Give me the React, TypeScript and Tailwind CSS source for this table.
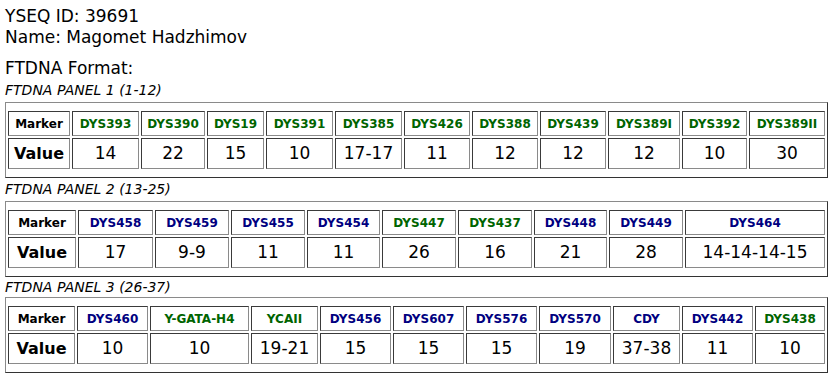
import React from "react";

type Marker = { name: string; value: string; green: boolean };

const panel1: Marker[] = [
  { name: "DYS393", value: "14", green: true },
  { name: "DYS390", value: "22", green: true },
  { name: "DYS19", value: "15", green: true },
  { name: "DYS391", value: "10", green: true },
  { name: "DYS385", value: "17-17", green: true },
  { name: "DYS426", value: "11", green: true },
  { name: "DYS388", value: "12", green: true },
  { name: "DYS439", value: "12", green: true },
  { name: "DYS389I", value: "12", green: true },
  { name: "DYS392", value: "10", green: true },
  { name: "DYS389II", value: "30", green: true },
];

const panel2: Marker[] = [
  { name: "DYS458", value: "17", green: false },
  { name: "DYS459", value: "9-9", green: false },
  { name: "DYS455", value: "11", green: false },
  { name: "DYS454", value: "11", green: false },
  { name: "DYS447", value: "26", green: true },
  { name: "DYS437", value: "16", green: true },
  { name: "DYS448", value: "21", green: false },
  { name: "DYS449", value: "28", green: false },
  { name: "DYS464", value: "14-14-14-15", green: false },
];

const panel3: Marker[] = [
  { name: "DYS460", value: "10", green: false },
  { name: "Y-GATA-H4", value: "10", green: true },
  { name: "YCAII", value: "19-21", green: true },
  { name: "DYS456", value: "15", green: false },
  { name: "DYS607", value: "15", green: false },
  { name: "DYS576", value: "15", green: false },
  { name: "DYS570", value: "19", green: false },
  { name: "CDY", value: "37-38", green: false },
  { name: "DYS442", value: "11", green: false },
  { name: "DYS438", value: "10", green: true },
];

const cell =
  "flex items-center justify-center border border-t-[#3a3a3a] border-l-[#3a3a3a] border-b-[#8a8a8a] border-r-[#8a8a8a]";

function Panel({
  title,
  markers,
  cols,
  titleClass,
}: {
  title: string;
  markers: Marker[];
  cols: string;
  titleClass: string;
}) {
  return (
    <>
      <div className={`${titleClass} text-[14px] italic`}>{title}</div>
      <div className="w-[823px] h-[76px] border border-t-[#8a8a8a] border-l-[#8a8a8a] border-b-[#333333] border-r-[#333333] px-[2px] py-[8px]">
        <div className={`grid ${cols} grid-rows-[25px_31px] gap-[2px] grid-flow-col`}>
          <div className={`${cell} text-[12px] font-bold`}>Marker</div>
          <div className={`${cell} text-[16px] font-bold`}>Value</div>
          {markers.map((m) => (
            <React.Fragment key={m.name}>
              <div
                className={`${cell} text-[12px] font-bold ${
                  m.green ? "text-[#006400]" : "text-[#000080]"
                }`}
              >
                {m.name}
              </div>
              <div className={`${cell} text-[17px]`}>{m.value}</div>
            </React.Fragment>
          ))}
        </div>
      </div>
    </>
  );
}

export default function App() {
  return (
    <div className="w-[829px] h-[373px] overflow-hidden bg-white text-black font-['DejaVu_Sans',sans-serif] pl-[5px] pt-[6px]">
      <div className="text-[17px] leading-[21px]">YSEQ ID: 39691</div>
      <div className="text-[17px] leading-[21px]">Name: Magomet Hadzhimov</div>
      <div className="text-[17px] leading-[21px] mt-[10px]">FTDNA Format:</div>
      <Panel
        title="FTDNA PANEL 1 (1-12)"
        titleClass="h-[23px] leading-[23px]"
        markers={panel1}
        cols="grid-cols-[62px_67px_64px_57px_67px_67px_66px_66px_66px_72px_65px_76px]"
      />
      <Panel
        title="FTDNA PANEL 2 (13-25)"
        titleClass="h-[23px] leading-[23px]"
        markers={panel2}
        cols="grid-cols-[68px_75px_74px_74px_73px_74px_74px_73px_74px_140px]"
      />
      <Panel
        title="FTDNA PANEL 3 (26-37)"
        titleClass="h-[20px] leading-[20px]"
        markers={panel3}
        cols="grid-cols-[67px_71px_99px_67px_71px_71px_71px_72px_67px_71px_70px]"
      />
    </div>
  );
}
